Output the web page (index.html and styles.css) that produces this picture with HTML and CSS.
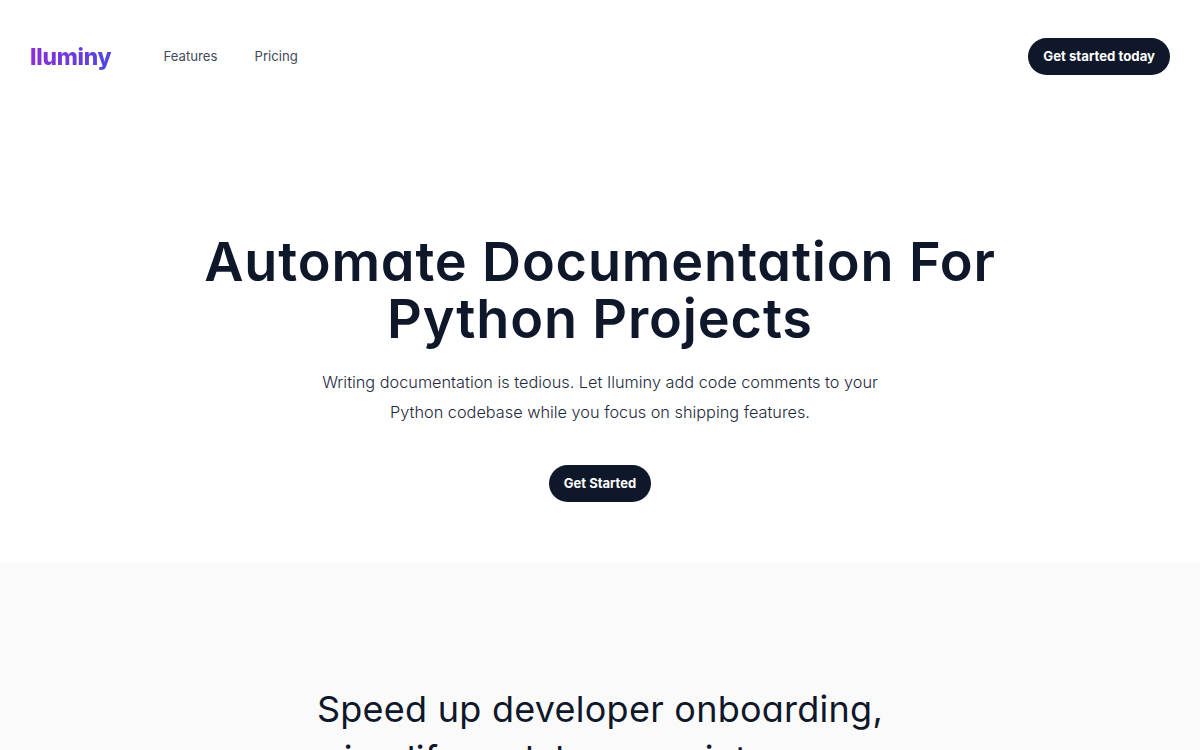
FILE: index.html
```html
<!DOCTYPE html>
<html lang="en">
<head>
<meta charset="utf-8">
<title>Iluminy</title>
<link rel="stylesheet" href="styles.css">
</head>
<body>
<header class="nav">
  <div class="nav-left">
    <a class="logo" href="#">Iluminy</a>
    <nav class="links"><a href="#">Features</a><a href="#">Pricing</a></nav>
  </div>
  <a class="btn" href="#">Get started today</a>
</header>
<main>
  <section class="hero">
    <h1>Automate Documentation For<br>Python Projects</h1>
    <p>Writing documentation is tedious. Let Iluminy add code comments to your<br>Python codebase while you focus on shipping features.</p>
    <a class="btn" href="#">Get Started</a>
  </section>
  <section class="features">
    <h2>Speed up developer onboarding,<br>simplify codebase maintenance</h2>
  </section>
</main>
</body>
</html>
```
FILE: styles.css
```css
* { box-sizing: border-box; }
html, body { margin: 0; height: 750px; overflow: hidden; }
body { background: #fff; color: #0f172a; font-family: Inter, "Liberation Sans", sans-serif; }
a { text-decoration: none; color: inherit; }
.nav { display: flex; justify-content: space-between; align-items: center; height: 112px; padding: 0 30px; }
.nav-left { display: flex; align-items: center; gap: 52px; }
.logo { font-size: 22.8px; font-weight: 800; letter-spacing: -0.25px; background: linear-gradient(90deg, #8b2fd8, #4f46e5); -webkit-background-clip: text; background-clip: text; color: transparent; }
.links { display: flex; gap: 37px; font-size: 13.2px; color: #3f4a5c; }
.btn { display: inline-block; padding: 0 15px; height: 37px; line-height: 37px; border-radius: 19px; background: #0f172a; color: #fff; font-size: 13.2px; font-weight: 700; }
.hero { display: flex; flex-direction: column; align-items: center; text-align: center; height: 451px; padding-top: 121px; }
h1 { margin: 0; font-size: 54px; line-height: 57px; font-weight: 600; letter-spacing: 0.85px; font-feature-settings: "cv11"; }
.hero p { margin: 20px 0 0; font-size: 16.3px; line-height: 30px; color: #1e293b; font-weight: 300; }
.hero .btn { margin-top: 38px; font-size: 13px; }
.features { background: #fafafa; height: 187px; padding-top: 121px; text-align: center; }
h2 { margin: 0; font-size: 36px; line-height: 50px; font-weight: 400; letter-spacing: 0.25px; font-feature-settings: "cv11"; }
```
